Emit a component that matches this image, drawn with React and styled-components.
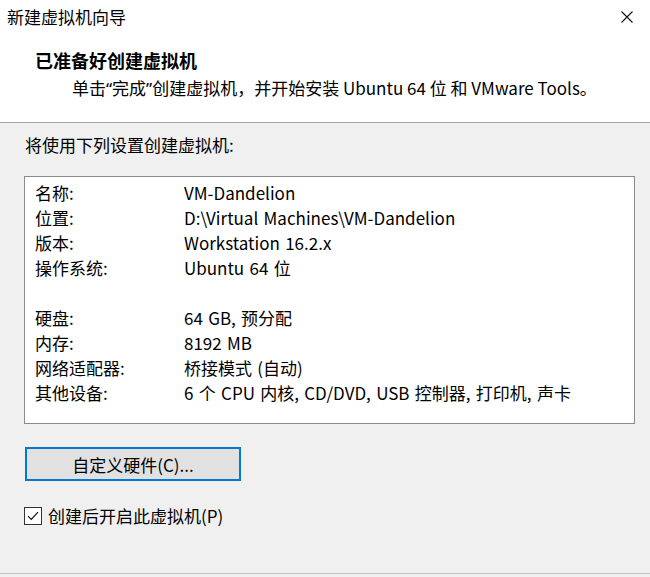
import React from 'react';
import styled, { createGlobalStyle } from 'styled-components';

const GlobalStyle = createGlobalStyle`
  html, body {
    margin: 0;
    padding: 0;
    background: #f0f0f0;
  }
  body {
    font-family: "Noto Sans CJK SC", "Microsoft YaHei UI", sans-serif;
    color: #000;
  }
`;

const Dialog = styled.div`
  width: 650px;
  height: 577px;
  display: flex;
  flex-direction: column;
  background: #f0f0f0;
  overflow: hidden;
`;

const Header = styled.div`
  height: 122px;
  background: #fff;
  border-bottom: 1px solid #a8a8a8;
  display: flex;
  flex-direction: column;
`;

const TitleBar = styled.div`
  height: 34px;
  display: flex;
  align-items: center;
  justify-content: space-between;
  padding: 0 16px 0 7px;
`;

const Title = styled.div`
  font-size: 17px;
  line-height: 34px;
`;

const CloseButton = styled.button`
  border: none;
  background: transparent;
  padding: 0;
  width: 14px;
  height: 14px;
  display: flex;
  align-items: center;
  justify-content: center;
  cursor: pointer;
`;

const Heading = styled.div`
  margin: 13px 0 0 35px;
  font-size: 18px;
  font-weight: bold;
  line-height: 26px;
`;

const Subtitle = styled.div`
  margin: 3px 0 0 72px;
  font-size: 17px;
  line-height: 24px;
`;

// half-width quotes, as the Windows UI font draws them
const Quote = styled.span`
  font-family: "Noto Sans", sans-serif;
`;

const Body = styled.div`
  padding: 0 16px 0 24px;
  display: flex;
  flex-direction: column;
  align-items: flex-start;
`;

const Intro = styled.div`
  margin: 10px 0 0 1px;
  font-size: 17px;
  line-height: 24px;
`;

const SummaryBox = styled.div`
  margin-top: 19px;
  width: 611px;
  height: 248px;
  box-sizing: border-box;
  background: #fff;
  border: 1px solid #8c8c8c;
  padding: 3px 10px;
`;

const Row = styled.div`
  display: flex;
  height: 25px;
  align-items: center;
  font-size: 17px;
  line-height: 25px;
  white-space: nowrap;
`;

const Label = styled.span`
  width: 149px;
  flex-shrink: 0;
`;

const Value = styled.span`
  word-spacing: 1.5px;
`;

const Button = styled.button`
  margin: 23px 0 0 1px;
  width: 216px;
  height: 34px;
  box-sizing: border-box;
  background: #e1e1e1;
  border: 2px solid #0078d7;
  font-family: inherit;
  font-size: 17px;
  color: #000;
  padding: 0;
  cursor: pointer;
`;

const CheckRow = styled.label`
  margin-top: 23px;
  display: flex;
  align-items: center;
  gap: 6px;
  height: 24px;
  font-size: 17px;
  line-height: 24px;
  cursor: pointer;
`;

const CheckBox = styled.span`
  width: 18px;
  height: 18px;
  box-sizing: border-box;
  border: 1px solid #333;
  background: #fff;
  display: flex;
  align-items: center;
  justify-content: center;
`;

const Footer = styled.div`
  margin-top: auto;
  height: 3px;
  border-top: 1px solid #c4c4c4;
`;

const rows = [
  ['名称:', 'VM-Dandelion'],
  ['位置:', 'D:\\Virtual Machines\\VM-Dandelion'],
  ['版本:', 'Workstation 16.2.x'],
  ['操作系统:', 'Ubuntu 64 位'],
  null,
  ['硬盘:', '64 GB, 预分配'],
  ['内存:', '8192 MB'],
  ['网络适配器:', '桥接模式 (自动)'],
  ['其他设备:', '6 个 CPU 内核, CD/DVD, USB 控制器, 打印机, 声卡'],
];

const App = () => {
  return (
    <Dialog>
      <GlobalStyle />
      <Header>
        <TitleBar>
          <Title>新建虚拟机向导</Title>
          <CloseButton title="关闭">
            <svg width="12" height="12" viewBox="0 0 12 12">
              <path d="M0.5 0.5 L11.5 11.5 M11.5 0.5 L0.5 11.5" stroke="#111" strokeWidth="1.1" fill="none" />
            </svg>
          </CloseButton>
        </TitleBar>
        <Heading>已准备好创建虚拟机</Heading>
        <Subtitle>
          单击<Quote>“</Quote>完成<Quote>”</Quote>创建虚拟机，并开始安装 Ubuntu 64 位 和 VMware Tools。
        </Subtitle>
      </Header>
      <Body>
        <Intro>将使用下列设置创建虚拟机:</Intro>
        <SummaryBox>
          {rows.map((row, i) =>
            row ? (
              <Row key={i}>
                <Label>{row[0]}</Label>
                <Value>{row[1]}</Value>
              </Row>
            ) : (
              <Row key={i} />
            )
          )}
        </SummaryBox>
        <Button>自定义硬件(C)...</Button>
        <CheckRow>
          <CheckBox>
            <svg width="14" height="14" viewBox="0 0 14 14">
              <path d="M2 7.2 L5.3 10.5 L12 3.2" stroke="#111" strokeWidth="1.2" fill="none" />
            </svg>
          </CheckBox>
          创建后开启此虚拟机(P)
        </CheckRow>
      </Body>
      <Footer />
    </Dialog>
  );
};

export default App;
